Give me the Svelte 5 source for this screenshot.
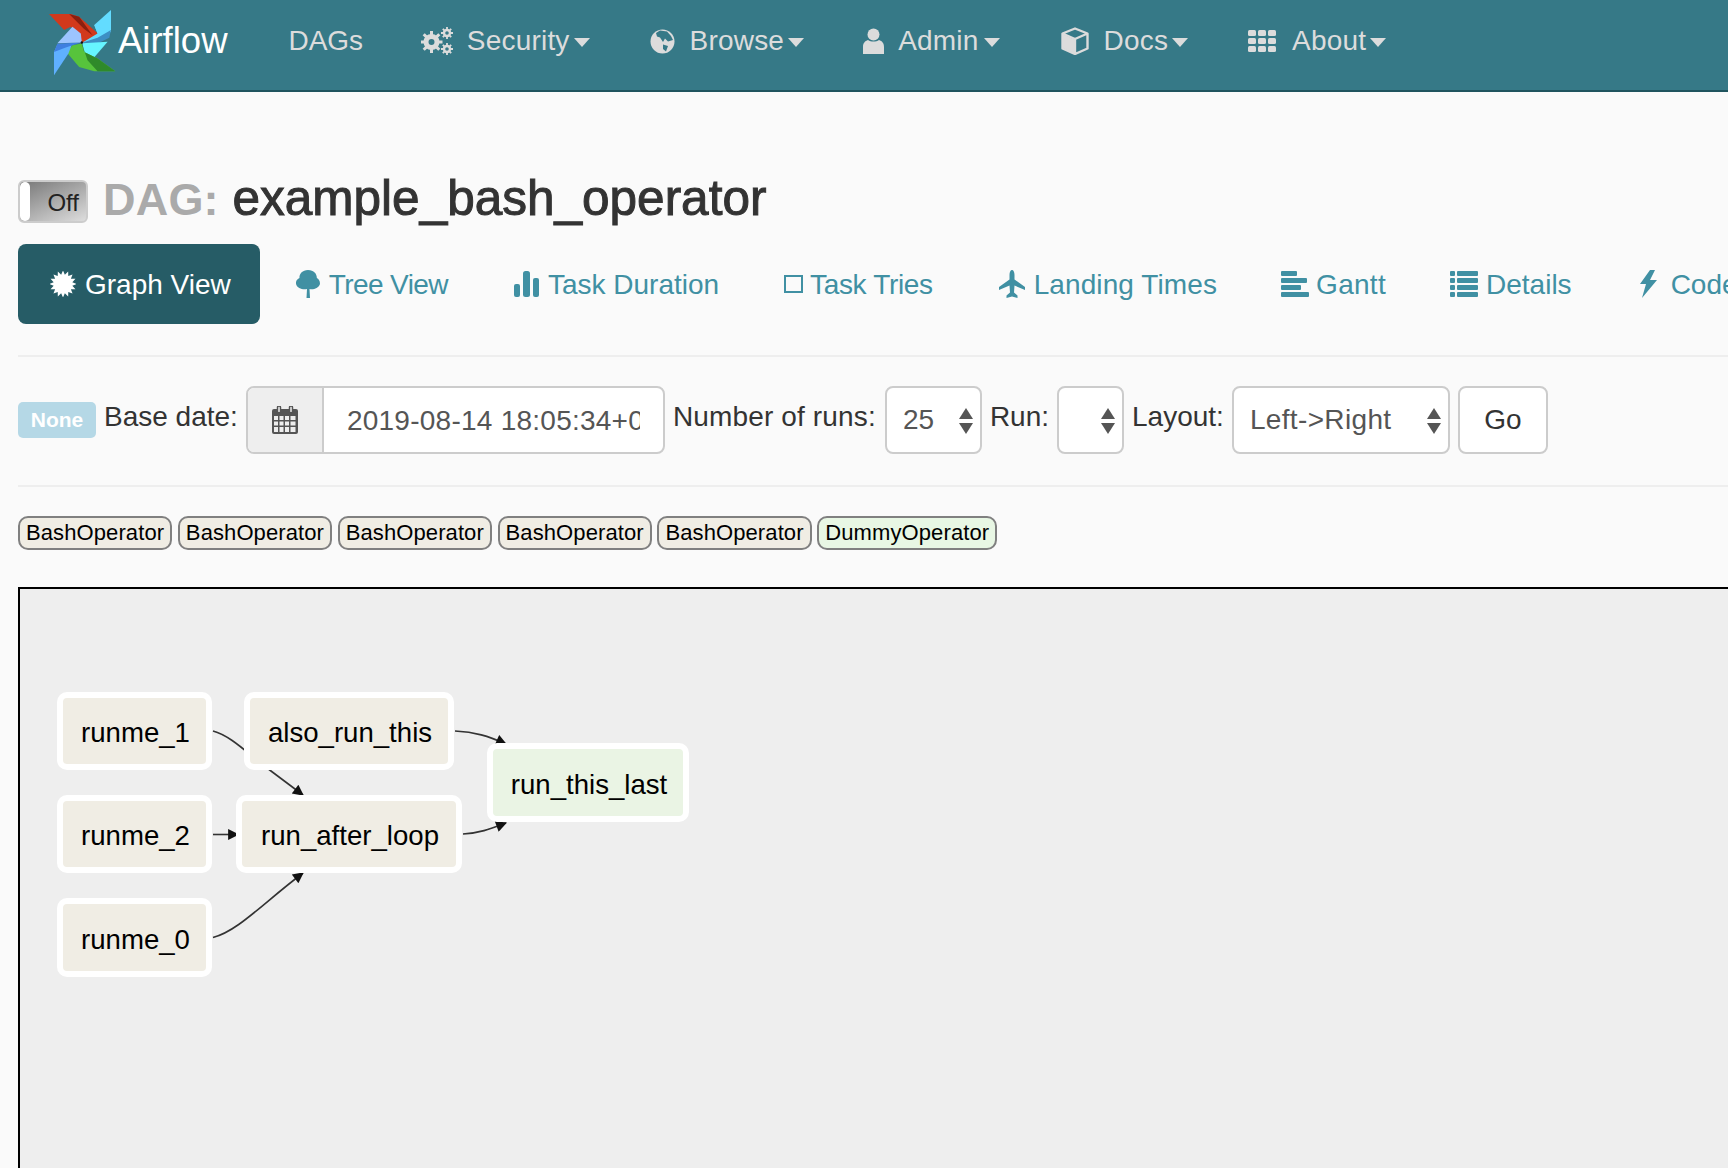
<script>
  const nodes = [
    { label: 'runme_1', x: 60, y: 694, w: 149, h: 72 },
    { label: 'also_run_this', x: 247, y: 694, w: 204, h: 72 },
    { label: 'run_this_last', x: 490, y: 745, w: 196, h: 73, done: true },
    { label: 'runme_2', x: 60, y: 797, w: 149, h: 72 },
    { label: 'run_after_loop', x: 239, y: 797, w: 220, h: 72 },
    { label: 'runme_0', x: 60, y: 900, w: 149, h: 73 }
  ];
  const operators = ['BashOperator', 'BashOperator', 'BashOperator', 'BashOperator', 'BashOperator', 'DummyOperator'];
  const burst = Array.from({ length: 32 }, (_, i) => {
    const r = i % 2 ? 9.5 : 13.5;
    const a = (i * Math.PI) / 16;
    return `${(13 + r * Math.sin(a)).toFixed(2)},${(13 - r * Math.cos(a)).toFixed(2)}`;
  }).join(' ');
</script>

<div class="page">
  <nav class="navbar">
    <div class="brand">
      <svg class="logo" viewBox="60 22 200 200" width="67" height="67">
        <polygon fill="#d2391c" points="60,37 125,37 150,45 206,95 188,115 160,122 125,75 105,85" />
        <polygon fill="#8a1f10" points="120,37 150,45 190,100 165,82" />
        <polygon fill="#63dcff" points="245,25 245,90 205,95 195,70" />
        <polygon fill="#63dcff" points="195,70 245,90 205,118 160,122 205,95" />
        <polygon fill="#3d8fc4" points="245,85 240,108 205,125 160,122 205,108" />
        <polygon fill="#66f5ff" points="160,124 235,120 192,170 165,152" />
        <polygon fill="#57c33c" points="112,150 130,130 158,125 165,150 205,170 258,208 195,208 150,195" />
        <polygon fill="#2f8a2a" points="158,125 165,150 205,170 258,208 205,208 175,175" />
        <polygon fill="#5fb0ff" points="75,220 75,150 85,128 128,128 118,155" />
        <polygon fill="#3f7fe0" points="75,150 85,126 155,122 110,137" />
        <polygon fill="#9cc4ff" points="85,124 130,75 155,95 158,122" />
        <circle cx="158" cy="122" r="3.5" fill="#111" />
      </svg>
      <span class="brand-name">Airflow</span>
    </div>
    <span class="nav-item"><span class="nt-plain">DAGs</span></span>
    <span class="nav-item">
      <svg class="ic" width="32" height="30" viewBox="0 0 32 30">
        <circle cx="10.500" cy="16" r="5.500" fill="none" stroke="#dcdcdc" stroke-width="5" />
        <path stroke="#dcdcdc" stroke-width="3" fill="none" d="M10.500 5v4.500M10.500 22.500V27M-.5 16H4M17 16h4.500M2.700 8.200l3.200 3.200M15.100 20.600l3.200 3.200M2.700 23.800l3.200-3.200M15.100 11.400l3.200-3.200" />
        <circle cx="26" cy="7" r="3" fill="none" stroke="#dcdcdc" stroke-width="2.400" />
        <circle cx="26" cy="23" r="3" fill="none" stroke="#dcdcdc" stroke-width="2.400" />
        <path stroke="#dcdcdc" stroke-width="1.800" fill="none" d="M26 1v2.500M26 10.500V13M20 7h2.500M29.500 7H32M21.800 2.800l1.800 1.800M28.400 9.400l1.800 1.800M21.800 11.200l1.800-1.800M28.400 4.600l1.800-1.800M26 17v2.500M26 26.500V29M20 23h2.500M29.500 23H32M21.800 18.800l1.800 1.800M28.400 25.400l1.800 1.800M21.800 27.200l1.800-1.800M28.400 20.600l1.800-1.800" />
      </svg>
      <span class="nt t-security">Security</span><i class="caret"></i>
    </span>
    <span class="nav-item">
      <svg class="ic" width="25" height="25" viewBox="0 0 25 25">
        <circle cx="12.500" cy="12.500" r="12" fill="#dcdcdc" />
        <path fill="#367987" d="M6 4l4-2.500 7 1 4 4.500 2 4-5 1.500-3-3-2 3.500-3-4.500-3-1zM13 15.500l5 1.500-2 5.500-3-2.500z" />
      </svg>
      <span class="nt t-browse">Browse</span><i class="caret"></i>
    </span>
    <span class="nav-item">
      <svg class="ic" width="21" height="26" viewBox="0 0 21 26">
        <circle cx="10.500" cy="6.500" r="6" fill="#dcdcdc" />
        <path fill="#dcdcdc" d="M0 26v-7c0-4 2-6 5-7 3 2 8 2 11 0 3 1 5 3 5 7v7z" />
      </svg>
      <span class="nt t-admin">Admin</span><i class="caret"></i>
    </span>
    <span class="nav-item">
      <svg class="ic" width="28" height="28" viewBox="0 0 28 28">
        <path fill="#dcdcdc" d="M1.500 7L13.500 12.500V26.500L1.500 21z" />
        <path fill="none" stroke="#dcdcdc" stroke-width="2.400" stroke-linejoin="round" d="M14 1.500L26.500 6.500V21.500L14 27 1.500 21.500V6.500zM1.500 6.500L14 12 26.500 6.500M14 12V27" />
      </svg>
      <span class="nt t-docs">Docs</span><i class="caret"></i>
    </span>
    <span class="nav-item">
      <svg class="ic" width="28" height="22" viewBox="0 0 28 22">
        <g fill="#dcdcdc">
          {#each [0, 1, 2] as r}
            {#each [0, 1, 2] as c}
              <rect x={c * 10} y={r * 8} width="8" height="6" rx="1.500" />
            {/each}
          {/each}
        </g>
      </svg>
      <span class="nt t-about">About</span><i class="caret"></i>
    </span>
  </nav>

  <main class="content">
    <div class="title-row">
      <div class="toggle"><span class="knob"></span><span class="toggle-label">Off</span></div>
      <h1><span class="dag">DAG:</span> example_bash_operator</h1>
    </div>

    <ul class="tabs">
      <li class="tab active">
        <svg width="26" height="26" viewBox="0 0 26 26"><polygon fill="#fff" points={burst} /></svg>
        <span>Graph View</span>
      </li>
      <li class="tab tree">
        <svg width="24" height="28" viewBox="0 0 24 28">
          <path fill="#4090a3" d="M10.500 28h3.500l-.5-9c4 1 9-1 10.300-4.500.7-3-1-5.500-3-6.500.3-3.500-2.500-8-8.800-8-6 0-9 4.500-8.500 8C1 9-.7 11.500.2 14.500c1 3.500 6.300 5.500 10.800 4.500z" />
        </svg>
        <span>Tree View</span>
      </li>
      <li class="tab duration">
        <svg width="25" height="26" viewBox="0 0 25 26">
          <g fill="#4090a3"><rect x="0" y="13" width="6" height="13" rx="2" /><rect x="9" y="0" width="7" height="26" rx="2.500" /><rect x="19" y="7" width="6" height="19" rx="2" /></g>
        </svg>
        <span>Task Duration</span>
      </li>
      <li class="tab tries">
        <svg width="19" height="18" viewBox="0 0 19 18"><rect x="1" y="1" width="17" height="16" fill="none" stroke="#4090a3" stroke-width="2" /></svg>
        <span>Task Tries</span>
      </li>
      <li class="tab landing">
        <svg width="26" height="28" viewBox="0 0 26 28">
          <path fill="#4090a3" d="M13 0c1.500 0 2.500 2 2.500 5v4.500L26 17v3l-10.500-4.500-.5 7 3.500 3V28L13 26.500 7.500 28v-2.500l3.500-3-.5-7L0 20v-3l10.500-7.500V5C10.500 2 11.500 0 13 0z" />
        </svg>
        <span>Landing Times</span>
      </li>
      <li class="tab gantt">
        <svg width="28" height="26" viewBox="0 0 28 26">
          <g fill="#4090a3"><rect x="0" y="0" width="16" height="5" rx="1" /><rect x="0" y="7" width="26" height="5" rx="1" /><rect x="0" y="14" width="20" height="5" rx="1" /><rect x="0" y="21" width="28" height="5" rx="1" /></g>
        </svg>
        <span>Gantt</span>
      </li>
      <li class="tab details">
        <svg width="28" height="26" viewBox="0 0 28 26">
          <g fill="#4090a3">
            {#each [0, 7, 14, 21] as y}
              <rect x="0" {y} width="5" height="5" rx="1" /><rect x="7" {y} width="21" height="5" rx="1" />
            {/each}
          </g>
        </svg>
        <span>Details</span>
      </li>
      <li class="tab code">
        <svg width="19" height="28" viewBox="0 0 19 28"><path fill="#4090a3" d="M12 0L2 14h6L4 28l15-18h-7l5-10z" transform="translate(-1 0)" /></svg>
        <span>Code</span>
      </li>
    </ul>

    <hr />

    <form class="controls">
      <span class="badge">None</span>
      <span class="lbl">Base date:</span>
      <div class="date-group">
        <span class="addon">
          <svg width="26" height="28" viewBox="0 0 26 28">
            <path fill="#555" fill-rule="evenodd" d="M2 3h3v3h4V3h8v3h4V3h3a2 2 0 0 1 2 2v21a2 2 0 0 1-2 2H2a2 2 0 0 1-2-2V5a2 2 0 0 1 2-2zM2 10v4h4v-4zM7.500 10v4h4v-4zM13 10v4h4v-4zM18.500 10v4h5v-4zM2 15.500v4h4v-4zM7.500 15.500v4h4v-4zM13 15.500v4h4v-4zM18.500 15.500v4h5v-4zM2 21v5h4v-5zM7.500 21v5h4v-5zM13 21v5h4v-5zM18.500 21v5h5v-5z" />
            <rect x="5.500" y="0" width="3" height="7" rx="1.500" fill="none" stroke="#555" stroke-width="1.500" />
            <rect x="17.500" y="0" width="3" height="7" rx="1.500" fill="none" stroke="#555" stroke-width="1.500" />
          </svg>
        </span>
        <span class="date-value"><span>2019-08-14 18:05:34+00:00</span></span>
      </div>
      <span class="lbl runs-lbl">Number of runs:</span>
      <div class="sel s-runs"><span>25</span><i class="updown"></i></div>
      <span class="lbl">Run:</span>
      <div class="sel s-run"><span></span><i class="updown"></i></div>
      <span class="lbl">Layout:</span>
      <div class="sel s-layout"><span class="layout-v">Left-&gt;Right</span><i class="updown"></i></div>
      <button type="button" class="go">Go</button>
    </form>

    <hr class="hr2" />

    <div class="legend">
      {#each operators as op}
        <span class="op" class:dummy={op === 'DummyOperator'}>{op}</span>
      {/each}
    </div>

    <div class="graph">
      <svg width="1710" height="590" viewBox="18 586 1710 590">
        <defs>
          <marker id="arrow" viewBox="0 0 10 10" refX="9" refY="5" markerWidth="13" markerHeight="11" markerUnits="userSpaceOnUse" orient="auto">
            <path d="M0 0L10 5L0 10z" fill="#111" />
          </marker>
        </defs>
        <g fill="none" stroke="#333" stroke-width="1.600">
          <path d="M213 730C232 735 250 755 271 770L303 794" marker-end="url(#arrow)" />
          <path d="M213 833.500H238" marker-end="url(#arrow)" />
          <path d="M213 936.500C238 930 262 903 303 872" marker-end="url(#arrow)" />
          <path d="M455 730C475 731 488 735 506 743" marker-end="url(#arrow)" />
          <path d="M463 833C480 832 490 828 506 822" marker-end="url(#arrow)" />
        </g>
        {#each nodes as n}
          <g>
            <rect x={n.x} y={n.y} width={n.w} height={n.h} rx="7" class="node" class:green={n.done} />
            <text x={n.x + n.w / 2 + 1} y={n.y + n.h / 2 + 11} class="node-text">{n.label}</text>
          </g>
        {/each}
      </svg>
    </div>
  </main>
</div>

<style>
  :global(body) {
    margin: 0;
    background: #fafafa;
  }
  .page {
    width: 1728px;
    height: 1168px;
    overflow: hidden;
    font-family: "Liberation Sans", Arial, sans-serif;
    font-size: 28px;
    color: #333;
    background: #fafafa;
  }
  .navbar {
    box-sizing: border-box;
    height: 92px;
    padding-bottom: 8px;
    border-bottom: 2px solid #1f545e;
    background: #367987;
    display: flex;
    align-items: center;
    gap: 60px;
    padding-left: 49px;
    color: #dcdcdc;
  }
  .brand {
    display: flex;
    align-items: center;
    gap: 2px;
  }
  .logo {
    display: block;
    margin-top: 2px;
  }
  .brand-name {
    color: #fff;
    font-size: 36.500px;
    margin-top: -1px;
  }
  .nav-item {
    display: flex;
    align-items: center;
  }
  .nt-plain {
    margin-left: 1px;
    margin-right: -2px;
    letter-spacing: -0.1px;
  }
  .nt {
    letter-spacing: 0.2px;
  }
  .ic {
    display: block;
    flex: none;
  }
  .t-security { margin-left: 14px; }
  .t-browse { margin-left: 15px; }
  .t-admin { margin-left: 14px; }
  .t-docs { margin-left: 15px; }
  .t-about { margin-left: 16px; }
  .caret {
    width: 0;
    height: 0;
    margin-left: 4px;
    margin-top: 2px;
    border-left: 8px solid transparent;
    border-right: 8px solid transparent;
    border-top: 9px solid #dcdcdc;
  }
  .t-browse + .caret { margin-right: -1px; }
  .t-admin + .caret { margin-left: 5px; margin-right: 1px; }
  .content {
    padding-left: 18px;
  }
  .title-row {
    padding-top: 73px;
    height: 64px;
    margin-bottom: 15px;
    display: flex;
    align-items: center;
    gap: 15px;
  }
  .toggle {
    box-sizing: border-box;
    width: 70px;
    height: 43px;
    margin-top: 9px;
    border: 2px solid #ccc;
    border-radius: 6px;
    background: linear-gradient(155deg, #777 0%, #aaa 50%, #ddd 100%);
    display: flex;
    justify-content: space-between;
    align-items: center;
    overflow: hidden;
  }
  .knob {
    width: 10px;
    align-self: stretch;
    background: #fff;
    border-radius: 5px;
  }
  .toggle-label {
    font-size: 24px;
    color: #222;
    padding-right: 7px;
    padding-top: 2px;
  }
  h1 {
    margin: 0;
    font-size: 49.500px;
    font-weight: 400;
    color: #333;
    -webkit-text-stroke: 1px #333;
    white-space: nowrap;
  }
  .dag {
    color: #aaa;
    font-size: 45px;
    font-weight: 700;
    -webkit-text-stroke: 0;
    letter-spacing: 0.2px;
  }
  .tabs {
    list-style: none;
    margin: 0;
    padding: 0;
    display: flex;
    gap: 3px;
    height: 80px;
    white-space: nowrap;
  }
  .tab {
    display: flex;
    align-items: center;
    gap: 8px;
    padding: 0 32px;
    color: #4090a3;
    border-radius: 8px;
  }
  .tab span {
    margin-top: 2px;
  }
  .tab svg {
    display: block;
    flex: none;
  }
  .tab.active {
    background: #265c66;
    color: #fff;
    padding-right: 29px;
    gap: 9px;
  }
  .tree { gap: 9px; margin-left: 1px; }
  .tree span { letter-spacing: -0.6px; }
  .duration { gap: 9px; margin-left: -1px; }
  .tries { margin-left: -2px; gap: 7px; }
  .tries span { letter-spacing: -0.35px; }
  .landing { margin-left: -1px; gap: 9px; }
  .landing span { letter-spacing: 0.1px; }
  .gantt { margin-left: -3px; gap: 7px; }
  .gantt span { letter-spacing: 0.3px; }
  .details { margin-left: -3px; }
  .code { gap: 13px; }
  hr {
    border: 0;
    border-top: 2px solid #eee;
    margin: 31px 0 0;
  }
  .controls {
    margin: 29px 0 0;
    display: flex;
    align-items: center;
    height: 68px;
    white-space: nowrap;
  }
  .badge {
    box-sizing: border-box;
    width: 78px;
    height: 36px;
    margin-right: 8px;
    border-radius: 5px;
    background: #b5d8e6;
    color: #fff;
    font-size: 21px;
    font-weight: 700;
    display: flex;
    align-items: center;
    justify-content: center;
  }
  .lbl {
    margin-top: -6px;
  }
  .runs-lbl {
    letter-spacing: 0.15px;
  }
  .date-group {
    box-sizing: border-box;
    width: 419px;
    height: 68px;
    margin: 0 8px;
    border: 2px solid #ccc;
    border-radius: 8px;
    background: #fff;
    display: flex;
    overflow: hidden;
  }
  .addon {
    flex: none;
    box-sizing: border-box;
    width: 76px;
    background: #eee;
    border-right: 2px solid #ccc;
    display: flex;
    align-items: center;
    justify-content: center;
  }
  .date-value {
    width: 293px;
    margin-left: 23px;
    color: #555;
    display: flex;
    align-items: center;
  }
  .date-value span {
    display: block;
    width: 100%;
    overflow: hidden;
    white-space: nowrap;
    margin-top: 2px;
    letter-spacing: 0.25px;
  }
  .sel {
    box-sizing: border-box;
    position: relative;
    height: 68px;
    margin: 0 9px;
    border: 2px solid #ccc;
    border-radius: 8px;
    background: #fff;
    color: #555;
    display: flex;
    align-items: center;
    padding-left: 16px;
  }
  .layout-v {
    letter-spacing: 0.35px;
  }
  .s-runs { width: 97px; margin-right: 8px; }
  .s-run { width: 67px; margin: 0 8px; }
  .s-layout { width: 218px; margin: 0 8px; }
  .updown {
    position: absolute;
    right: 7px;
    top: 20px;
    width: 14px;
    height: 26px;
  }
  .updown::before,
  .updown::after {
    content: "";
    position: absolute;
    left: 0;
    border-left: 7px solid transparent;
    border-right: 7px solid transparent;
  }
  .updown::before {
    top: 0;
    border-bottom: 11px solid #555;
  }
  .updown::after {
    bottom: 0;
    border-top: 11px solid #555;
  }
  .go {
    box-sizing: border-box;
    width: 90px;
    height: 68px;
    padding: 0;
    border: 2px solid #ccc;
    border-radius: 8px;
    background: #fff;
    color: #333;
    font: inherit;
  }
  .hr2 {
    margin-top: 31px;
  }
  .legend {
    margin-top: 29px;
    height: 34px;
    display: flex;
    gap: 5.700px;
  }
  .op {
    box-sizing: border-box;
    height: 34px;
    padding: 0 6px;
    border: 2px solid #808080;
    border-radius: 10px;
    background: #f0ede4;
    color: #000;
    font-size: 22px;
    letter-spacing: 0.1px;
    line-height: 30px;
  }
  .op.dummy {
    background: #e8f7e4;
  }
  .graph {
    box-sizing: border-box;
    margin-top: 37px;
    height: 590px;
    border-top: 2px solid #000;
    border-left: 2px solid #000;
    background: #eee;
    overflow: hidden;
  }
  .graph svg {
    display: block;
    margin: -2px 0 0 -2px;
  }
  .node {
    fill: #f0ede4;
    stroke: #fff;
    stroke-width: 6px;
  }
  .node.green {
    fill: #eaf4e4;
  }
  .node-text {
    font-size: 27.600px;
    fill: #000;
    text-anchor: middle;
  }
</style>
